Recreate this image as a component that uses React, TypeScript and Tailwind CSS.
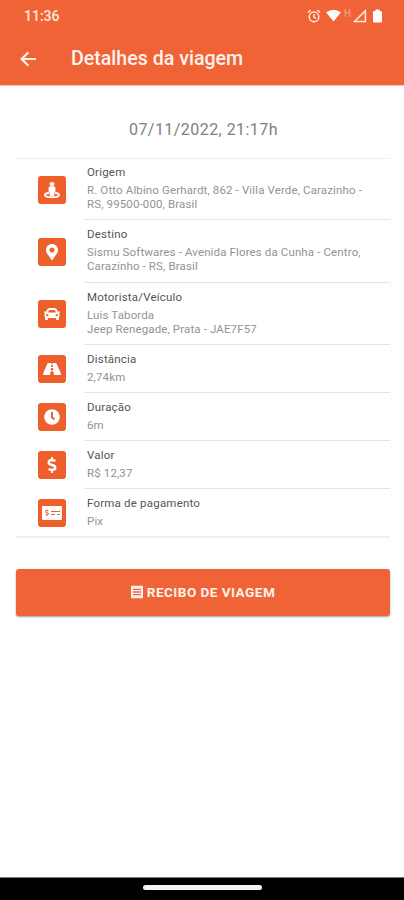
import type { IconType } from "react-icons";
import { FaCar, FaClock, FaDollarSign, FaMapMarkerAlt, FaMoneyCheckAlt, FaRoad, FaStreetView } from "react-icons/fa";
import { MdReceipt, MdSignalWifi4Bar } from "react-icons/md";

type Item = {
  icon: IconType;
  iconSize: number;
  iconClass?: string;
  title: string;
  lines: string[];
  height: string;
  pad: string;
};

const items: Item[] = [
  { icon: FaStreetView, iconSize: 16, iconClass: "stroke-white stroke-[26px]", title: "Origem", lines: ["R. Otto Albino Gerhardt, 862 - Villa Verde, Carazinho -", "RS, 99500-000, Brasil"], height: "h-[61px]", pad: "pt-1.5" },
  { icon: FaMapMarkerAlt, iconSize: 16, title: "Destino", lines: ["Sismu Softwares - Avenida Flores da Cunha - Centro,", "Carazinho - RS, Brasil"], height: "h-[63px]", pad: "pt-[7px]" },
  { icon: FaCar, iconSize: 16, title: "Motorista/Veículo", lines: ["Luis Taborda", "Jeep Renegade, Prata - JAE7F57"], height: "h-[62px]", pad: "pt-[7px]" },
  { icon: FaRoad, iconSize: 18, title: "Distância", lines: ["2,74km"], height: "h-12", pad: "pt-[7px]" },
  { icon: FaClock, iconSize: 16, title: "Duração", lines: ["6m"], height: "h-12", pad: "pt-[7px]" },
  { icon: FaDollarSign, iconSize: 16, title: "Valor", lines: ["R$ 12,37"], height: "h-12", pad: "pt-[7px]" },
  { icon: FaMoneyCheckAlt, iconSize: 20, title: "Forma de pagamento", lines: ["Pix"], height: "h-[47px]", pad: "pt-[7px]" },
];

function StatusBar() {
  return (
    <div className="flex h-8 items-center justify-between pr-[22px] pl-6 text-[#ffe9df]">
      <span className="text-[14px] font-medium">11:36</span>
      <div className="flex items-center">
        <svg width="14" height="14" viewBox="0 0 14 14" fill="none" stroke="currentColor" strokeWidth="1.5" className="-mt-px">
          <circle cx="7" cy="7.9" r="4.8" />
          <path d="M7 5.2V8.2L9 9.4M0.9 3.5L3.8 1.1M13.1 3.5L10.2 1.1" />
        </svg>
        <MdSignalWifi4Bar size={15} className="ml-[5px] -mt-px text-white" />
        <span className="ml-[3px] -mt-1.5 text-[10px] font-medium opacity-40">H</span>
        <svg width="14" height="14" viewBox="0 0 14 14" className="ml-0.5 -mt-px">
          <path d="M12.4 1.6V12.4H1.6Z" fill="none" stroke="currentColor" strokeWidth="1.5" />
        </svg>
        <svg width="9" height="14" viewBox="0 0 9 14" className="ml-[6px] -mt-px">
          <path d="M2.5 0.5H6.5V2H8Q9 2 9 3V12.5Q9 13.5 8 13.5H1Q0 13.5 0 12.5V3Q0 2 1 2H2.5Z" fill="#fff" />
        </svg>
      </div>
    </div>
  );
}

function DetailRow({ item, last }: { item: Item; last: boolean }) {
  const Icon = item.icon;
  return (
    <div className={`flex ${item.height}`}>
      <div className="flex w-[68px] shrink-0 items-center pl-[22px]">
        <div className="flex size-7 items-center justify-center rounded-[3px] bg-[#ee5f2c] text-white">
          <Icon size={item.iconSize} className={item.iconClass} />
        </div>
      </div>
      <div className={`flex-1 border-b pl-[3px] ${item.pad} ${last ? "border-transparent" : "border-[#e4e4e4]"}`}>
        <h2 className="text-[11.5px] leading-[14px] tracking-[0.2px] whitespace-nowrap text-[#555]">{item.title}</h2>
        <div className="mt-1 text-[11.5px] leading-[14px] tracking-[0.13px] whitespace-nowrap text-[#939393]">
          {item.lines.map((line) => (
            <p key={line}>{line}</p>
          ))}
        </div>
      </div>
    </div>
  );
}

export default function App() {
  return (
    <div className="flex h-[900px] w-[404px] flex-col overflow-hidden bg-white font-['Roboto',sans-serif]">
      <header className="h-[85px] bg-[#f06336] shadow-[0_1px_1px_#f9c5b3]">
        <StatusBar />
        <div className="flex h-[53px] items-center pl-5 text-[#fff3ed]">
          <svg width="16" height="16" viewBox="0 0 16 16" fill="none" stroke="currentColor" strokeWidth="2.1">
            <path d="M16 8H2M8.4 1.2L1.6 8L8.4 14.8" />
          </svg>
          <h1 className="ml-[35px] text-[19.6px] font-medium">Detalhes da viagem</h1>
        </div>
      </header>

      <main className="flex-1 px-4">
        <p className="flex h-[73px] items-center justify-center pt-4 pl-[3px] text-[16px] tracking-[0.45px] text-[#808080]">07/11/2022, 21:17h</p>
        <section className="w-[374px] border-y border-t-[#eeeeee] border-b-[#ececec] shadow-[0_1px_2px_#f3f3f3]">
          {items.map((item, i) => (
            <DetailRow key={item.title} item={item} last={i === items.length - 1} />
          ))}
        </section>
        <button className="mt-8 flex h-[47px] w-[374px] items-center justify-center rounded-[3px] bg-[#f06336] pr-0.5 pb-px text-[13.6px] font-bold tracking-[0.45px] text-[#fff3ed] shadow-[0_1px_2px_#a0a0a0]">
          <MdReceipt size={16} className="mr-0.5" />
          RECIBO DE VIAGEM
        </button>
      </main>

      <footer className="flex h-[23px] items-center justify-center border-t border-[#777] bg-black pb-[3px]">
        <div className="h-[5px] w-[119px] rounded-full bg-[#f4f4f4]" />
      </footer>
    </div>
  );
}
